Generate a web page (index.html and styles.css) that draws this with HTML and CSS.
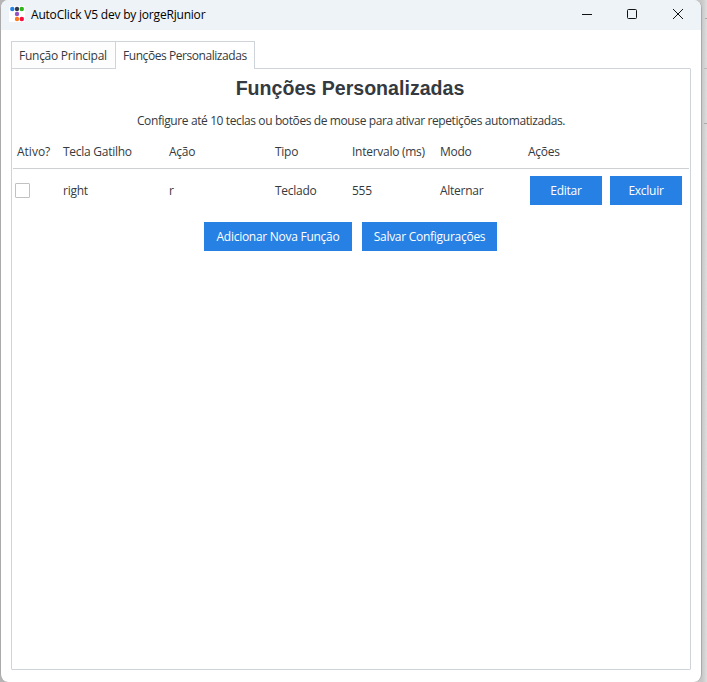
FILE: index.html
```
<!DOCTYPE html>
<html lang="pt-BR">
<head>
<meta charset="utf-8">
<title>AutoClick V5 dev by jorgeRjunior</title>
<link rel="stylesheet" href="styles.css">
</head>
<body>
<main class="window">
  <header class="titlebar">
    <svg class="logo" width="16" height="16" viewBox="0 0 16 16">
      <rect width="16" height="16" rx="1.5" fill="#fff"/>
      <circle cx="3.3" cy="3" r="2.2" fill="#2383e8"/>
      <circle cx="8" cy="3" r="2.2" fill="#343a46"/>
      <circle cx="12.8" cy="3" r="2.2" fill="#2eb51b"/>
      <circle cx="8" cy="8" r="2.2" fill="#9553c4"/>
      <circle cx="8" cy="13" r="2.2" fill="#ff7a1c"/>
      <circle cx="12.8" cy="13" r="2.2" fill="#fb0d3f"/>
    </svg>
    <h1 class="caption">AutoClick V5 dev by jorgeRjunior</h1>
    <svg class="controls" width="104" height="12" viewBox="0 0 104 12" fill="none" stroke="#111">
      <path d="M0 6.5h10"/>
      <rect x="45.5" y="1.5" width="9" height="9" rx="1"/>
      <path d="M91 1l10 10M101 1L91 11"/>
    </svg>
  </header>
  <nav class="tabs">
    <span class="tab tab-main">Função Principal</span>
    <span class="tab tab-custom">Funções Personalizadas</span>
  </nav>
  <section class="panel">
    <h2 class="heading">Funções Personalizadas</h2>
    <p class="intro">Configure até 10 teclas ou botões de mouse para ativar repetições automatizadas.</p>
    <div class="grid head">
      <span class="active-label">Ativo?</span><span>Tecla Gatilho</span><span>Ação</span><span>Tipo</span><span>Intervalo (ms)</span><span>Modo</span><span>Ações</span>
    </div>
    <div class="grid row">
      <i class="check"></i><span>right</span><span>r</span><span>Teclado</span><span>555</span><span>Alternar</span>
      <div class="actions"><button class="btn">Editar</button><button class="btn">Excluir</button></div>
    </div>
    <div class="footer"><button class="btn add">Adicionar Nova Função</button><button class="btn save">Salvar Configurações</button></div>
  </section>
</main>
</body>
</html>
```
FILE: styles.css
```
* { box-sizing: border-box; }
body {
  margin: 0;
  height: 682px;
  overflow: hidden;
  background:
    linear-gradient(#aaa, #aaa) 705px 18px / 2px 1px no-repeat,
    linear-gradient(#bbb, #bbb) 704px 68px / 3px 1px no-repeat,
    linear-gradient(#aaa, #aaa) 704px 123px / 3px 1px no-repeat,
    linear-gradient(90deg, #b5b5b5 0 50%, #c8c8c8 702px, #dedede 707px);
  font: 12px/16px "Open Sans", "Noto Sans", sans-serif;
  color: #343a40;
}
.window {
  width: 702px;
  height: 682px;
  border: solid #aaa;
  border-width: 0 1px 0 1px;
  border-radius: 8px;
  background: #fff;
  overflow: hidden;
}
.titlebar {
  height: 30px;
  display: flex;
  align-items: center;
  padding: 0 15px 2px 8px;
  background: #edf3f6;
}
.caption { margin: 1px auto 0 6px; font: inherit; color: #000; white-space: nowrap; letter-spacing: -0.2px; }
.tabs { display: flex; height: 28px; margin: 11px 0 -1px 10px; position: relative; }
.tab {
  border: 1px solid #ced4da;
  border-right: 0;
  padding: 6px 0 0 7px;
  background: #fdfdfd;
  white-space: nowrap;
}
.tab-main { width: 104px; border-radius: 1px 0 0 0; letter-spacing: -0.26px; }
.tab-custom { width: 140px; border-right: 1px solid #ced4da; border-bottom: 0; background: #fff; border-radius: 0 1px 0 0; letter-spacing: -0.44px; }
.panel {
  width: 680px;
  height: 602px;
  margin-left: 10px;
  border: 1px solid #ced4da;
  border-radius: 0 1px 1px 1px;
  padding: 0 1px;
}
.heading {
  margin: 7px 0 0;
  text-align: center;
  font: bold 19.6px/24px "Liberation Sans", Arial, sans-serif;
  padding-right: 2px;
}
.intro { margin: 13px 0 0; text-align: center; white-space: nowrap; letter-spacing: -0.39px; }
.grid {
  display: grid;
  grid-template-columns: 50px 106px 106px 77px 88px 88px 1fr;
  align-items: center;
  white-space: nowrap;
  letter-spacing: -0.27px;
}
.head { height: 40px; border-bottom: 1px solid #ced0d4; padding-top: 7px; }
.active-label { padding-left: 4px; letter-spacing: 0; }
.row { height: 43px; }
.check { width: 15px; height: 15px; margin-left: 2px; border: 1px solid #c1c1c1; border-radius: 1px; }
.actions { display: flex; gap: 8px; padding-left: 2px; }
.btn {
  width: 72px;
  height: 29px;
  padding: 0;
  border: 0;
  background: #2780e3;
  color: #fff;
  font: inherit;
  letter-spacing: -0.27px;
}
.footer { display: flex; gap: 10px; margin: 10px 0 0 191px; }
.add { width: 148px; }
.save { width: 135px; }
```
